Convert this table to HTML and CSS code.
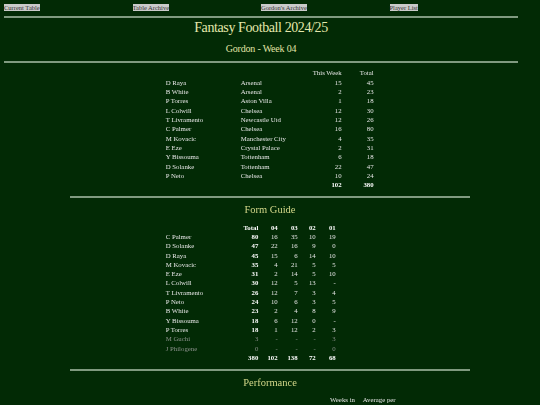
FILE: index.html
```html
<!DOCTYPE html>
<html lang="en">
<head>
<meta charset="utf-8">
<title>Fantasy Football 2024/25 - Gordon - Week 04</title>
<link rel="stylesheet" href="styles.css">
</head>
<body>
<div class="top">
  <nav class="nav">
    <a href="#">Current Table</a>
    <a href="#">Table Archive</a>
    <a href="#">Gordon's Archive</a>
    <a href="#">Player List</a>
  </nav>
  <hr class="rule first">
  <h1 class="title">Fantasy Football 2024/25</h1>
  <h2 class="sub">Gordon - Week 04</h2>
  <hr class="rule second">
</div>

<table class="grid week">
  <colgroup><col class="w-name"><col class="w-team"><col class="w-tw"><col class="w-tot"></colgroup>
  <tr><td></td><td></td><td class="num">This Week</td><td class="num">Total</td></tr>
  <tr><td>D Raya</td><td>Arsenal</td><td class="num">15</td><td class="num">45</td></tr>
  <tr><td>B White</td><td>Arsenal</td><td class="num">2</td><td class="num">23</td></tr>
  <tr><td>P Torres</td><td>Aston Villa</td><td class="num">1</td><td class="num">18</td></tr>
  <tr><td>L Colwill</td><td>Chelsea</td><td class="num">12</td><td class="num">30</td></tr>
  <tr><td>T Livramento</td><td>Newcastle Utd</td><td class="num">12</td><td class="num">26</td></tr>
  <tr><td>C Palmer</td><td>Chelsea</td><td class="num">16</td><td class="num">80</td></tr>
  <tr><td>M Kovacic</td><td>Manchester City</td><td class="num">4</td><td class="num">35</td></tr>
  <tr><td>E Eze</td><td>Crystal Palace</td><td class="num">2</td><td class="num">31</td></tr>
  <tr><td>Y Bissouma</td><td>Tottenham</td><td class="num">6</td><td class="num">18</td></tr>
  <tr><td>D Solanke</td><td>Tottenham</td><td class="num">22</td><td class="num">47</td></tr>
  <tr><td>P Neto</td><td>Chelsea</td><td class="num">10</td><td class="num">24</td></tr>
  <tr class="bold"><td></td><td></td><td class="num">102</td><td class="num">380</td></tr>
</table>

<section class="section">
  <hr class="rule mid">
  <h3 class="head">Form Guide</h3>
  <table class="grid form">
    <colgroup><col class="f-name"><col class="f-tot"><col class="f-04"><col class="f-03"><col class="f-02"><col class="f-01"></colgroup>
    <tr class="bold"><td></td><td class="num">Total</td><td class="num">04</td><td class="num">03</td><td class="num">02</td><td class="num">01</td></tr>
    <tr><td>C Palmer</td><td class="num b">80</td><td class="num">16</td><td class="num">35</td><td class="num">10</td><td class="num">19</td></tr>
    <tr><td>D Solanke</td><td class="num b">47</td><td class="num">22</td><td class="num">16</td><td class="num">9</td><td class="num">0</td></tr>
    <tr><td>D Raya</td><td class="num b">45</td><td class="num">15</td><td class="num">6</td><td class="num">14</td><td class="num">10</td></tr>
    <tr><td>M Kovacic</td><td class="num b">35</td><td class="num">4</td><td class="num">21</td><td class="num">5</td><td class="num">5</td></tr>
    <tr><td>E Eze</td><td class="num b">31</td><td class="num">2</td><td class="num">14</td><td class="num">5</td><td class="num">10</td></tr>
    <tr><td>L Colwill</td><td class="num b">30</td><td class="num">12</td><td class="num">5</td><td class="num">13</td><td class="num">-</td></tr>
    <tr><td>T Livramento</td><td class="num b">26</td><td class="num">12</td><td class="num">7</td><td class="num">3</td><td class="num">4</td></tr>
    <tr><td>P Neto</td><td class="num b">24</td><td class="num">10</td><td class="num">6</td><td class="num">3</td><td class="num">5</td></tr>
    <tr><td>B White</td><td class="num b">23</td><td class="num">2</td><td class="num">4</td><td class="num">8</td><td class="num">9</td></tr>
    <tr><td>Y Bissouma</td><td class="num b">18</td><td class="num">6</td><td class="num">12</td><td class="num">0</td><td class="num">-</td></tr>
    <tr><td>P Torres</td><td class="num b">18</td><td class="num">1</td><td class="num">12</td><td class="num">2</td><td class="num">3</td></tr>
    <tr class="out"><td>M Guchi</td><td class="num">3</td><td class="num">-</td><td class="num">-</td><td class="num">-</td><td class="num">3</td></tr>
    <tr class="out"><td>J Philogene</td><td class="num">0</td><td class="num">-</td><td class="num">-</td><td class="num">-</td><td class="num">0</td></tr>
    <tr class="bold"><td></td><td class="num">380</td><td class="num">102</td><td class="num">138</td><td class="num">72</td><td class="num">68</td></tr>
  </table>
</section>

<section class="section">
  <hr class="rule mid">
  <h3 class="head">Performance</h3>
  <table class="grid perf">
    <colgroup><col class="p-name"><col class="p-team"><col class="p-weeks"><col class="p-avg"></colgroup>
    <tr><td></td><td></td><td>Weeks in</td><td>Average per</td></tr>
  </table>
</section>
</body>
</html>
```

FILE: styles.css
```css
body {
  margin: 0;
  background: #022a05;
  color: #e6e6e6;
  font-family: "Liberation Serif", "Times New Roman", serif;
}

.top {
  width: 514px;
  margin-left: 4px;
  padding-top: 4px;
}

.nav {
  display: grid;
  grid-template-columns: repeat(4, 1fr);
  font-size: 6.5px;
  line-height: 7px;
  height: 7px;
}

.nav a {
  justify-self: start;
  background: #cacaca;
  color: #333333;
  text-decoration: none;
}

.rule {
  height: 0;
  border: 0;
  border-top: 2px solid #809a80;
  margin: 0;
}

.rule.first { margin-top: 5px; }
.rule.second { margin-top: 6.1px; }
.rule.mid { margin-top: 6.7px; }

.title {
  margin: 2.3px 0 0;
  font-size: 14px;
  line-height: 16px;
  font-weight: normal;
  text-align: center;
  letter-spacing: -0.4px;
  color: #e4e8ac;
}

.sub {
  margin: 6.6px 0 0;
  font-size: 10px;
  line-height: 12px;
  font-weight: normal;
  text-align: center;
  letter-spacing: -0.2px;
  color: #e0e4a6;
}

.grid {
  border-collapse: collapse;
  table-layout: fixed;
  font-size: 6.8px;
  will-change: opacity;
  opacity: 0.999;
}

.grid td {
  padding: 0;
  height: 9.33px;
  line-height: 9.33px;
  white-space: nowrap;
  overflow: visible;
}

.grid .num { text-align: right; }
.grid .bold td, .grid .b { font-weight: bold; color: #ffffff; }
.grid .out td { color: #8c918c; }

.week {
  margin: 5.3px 0 0 165.7px;
}

.w-name { width: 75px; }
.w-team { width: 72px; }
.w-tw { width: 28px; }
.w-tot { width: 32px; }

.section {
  width: 400px;
  margin-left: 70px;
}

.head {
  margin: 6.15px 0 0;
  font-size: 10.5px;
  line-height: 12px;
  font-weight: normal;
  text-align: center;
  color: #d4d88a;
  will-change: opacity;
  opacity: 0.999;
}

.form, .perf {
  margin: 6.15px 0 0 95.7px;
}

.f-name { width: 75px; }
.f-tot { width: 17.6px; }
.f-04 { width: 19.4px; }
.f-03 { width: 20px; }
.f-02 { width: 18px; }
.f-01 { width: 20px; }

.perf { margin-top: 5.85px; }
.p-name { width: 90px; }
.p-team { width: 74.3px; }
.p-weeks { width: 32.7px; }
.p-avg { width: 40px; }
```
